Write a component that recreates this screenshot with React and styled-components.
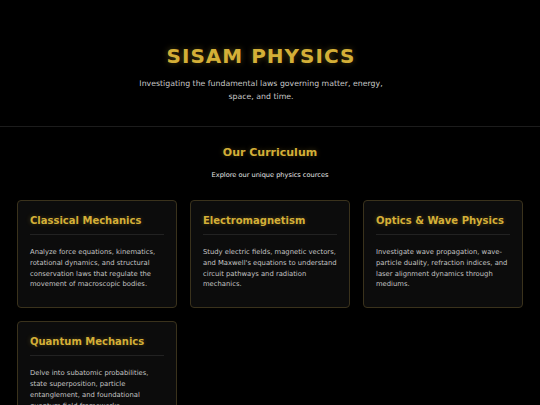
import React from "react"
import styled, { createGlobalStyle } from "styled-components"

const GlobalStyle = createGlobalStyle`
  body {
    margin: 0;
    background: #000;
    font-family: "DejaVu Sans", Verdana, sans-serif;
  }
`

const Header = styled.header`
  text-align: center;
  padding: 44px 38px 23px 20px;
  border-bottom: 1px solid #1c1c1c;
  h1 {
    margin: 0;
    font-size: 20px;
    letter-spacing: 1px;
    color: #d4af37;
    text-shadow: 0 0 6px rgba(212, 175, 55, 0.35);
  }
  p {
    margin: 9px auto 0;
    max-width: 270px;
    font-size: 7.8px;
    line-height: 13px;
    color: #c8c8c8;
  }
`

const Curriculum = styled.section`
  padding: 19px 17px 0;
  .intro {
    text-align: center;
    h2 {
      margin: 0;
      font-size: 11px;
      color: #d4af37;
      text-shadow: 0 0 5px rgba(212, 175, 55, 0.3);
    }
    p {
      margin: 12px 0 0;
      font-size: 6.6px;
      color: #e6e6e6;
    }
  }
`

const CardGrid = styled.div`
  display: grid;
  grid-template-columns: repeat(3, 160px);
  gap: 13px;
  margin-top: 21px;
`

const Card = styled.div`
  background: #0c0c0c;
  border: 1px solid #3a321c;
  border-radius: 4px;
  padding: 14px 12px 17px;
  h3 {
    margin: 0;
    padding-bottom: 8px;
    border-bottom: 1px solid #222;
    font-size: 10px;
    color: #d4af37;
    text-shadow: 0 0 5px rgba(212, 175, 55, 0.3);
  }
  p {
    margin: 12px 0 0;
    font-size: 6.8px;
    line-height: 10.8px;
    color: #c4c4c4;
  }
`

const courses = [
  {
    title: "Classical Mechanics",
    text: "Analyze force equations, kinematics, rotational dynamics, and structural conservation laws that regulate the movement of macroscopic bodies.",
  },
  {
    title: "Electromagnetism",
    text: "Study electric fields, magnetic vectors, and Maxwell's equations to understand circuit pathways and radiation mechanics.",
  },
  {
    title: "Optics & Wave Physics",
    text: "Investigate wave propagation, wave-particle duality, refraction indices, and laser alignment dynamics through mediums.",
  },
  {
    title: "Quantum Mechanics",
    text: "Delve into subatomic probabilities, state superposition, particle entanglement, and foundational quantum field frameworks.",
  },
]

const App = () => (
  <>
    <GlobalStyle />
    <Header>
      <h1>SISAM PHYSICS</h1>
      <p>Investigating the fundamental laws governing matter, energy, space, and time.</p>
    </Header>
    <Curriculum>
      <div className="intro">
        <h2>Our Curriculum</h2>
        <p>Explore our unique physics cources</p>
      </div>
      <CardGrid>
        {courses.map((c) => (
          <Card key={c.title}>
            <h3>{c.title}</h3>
            <p>{c.text}</p>
          </Card>
        ))}
      </CardGrid>
    </Curriculum>
  </>
)

export default App
